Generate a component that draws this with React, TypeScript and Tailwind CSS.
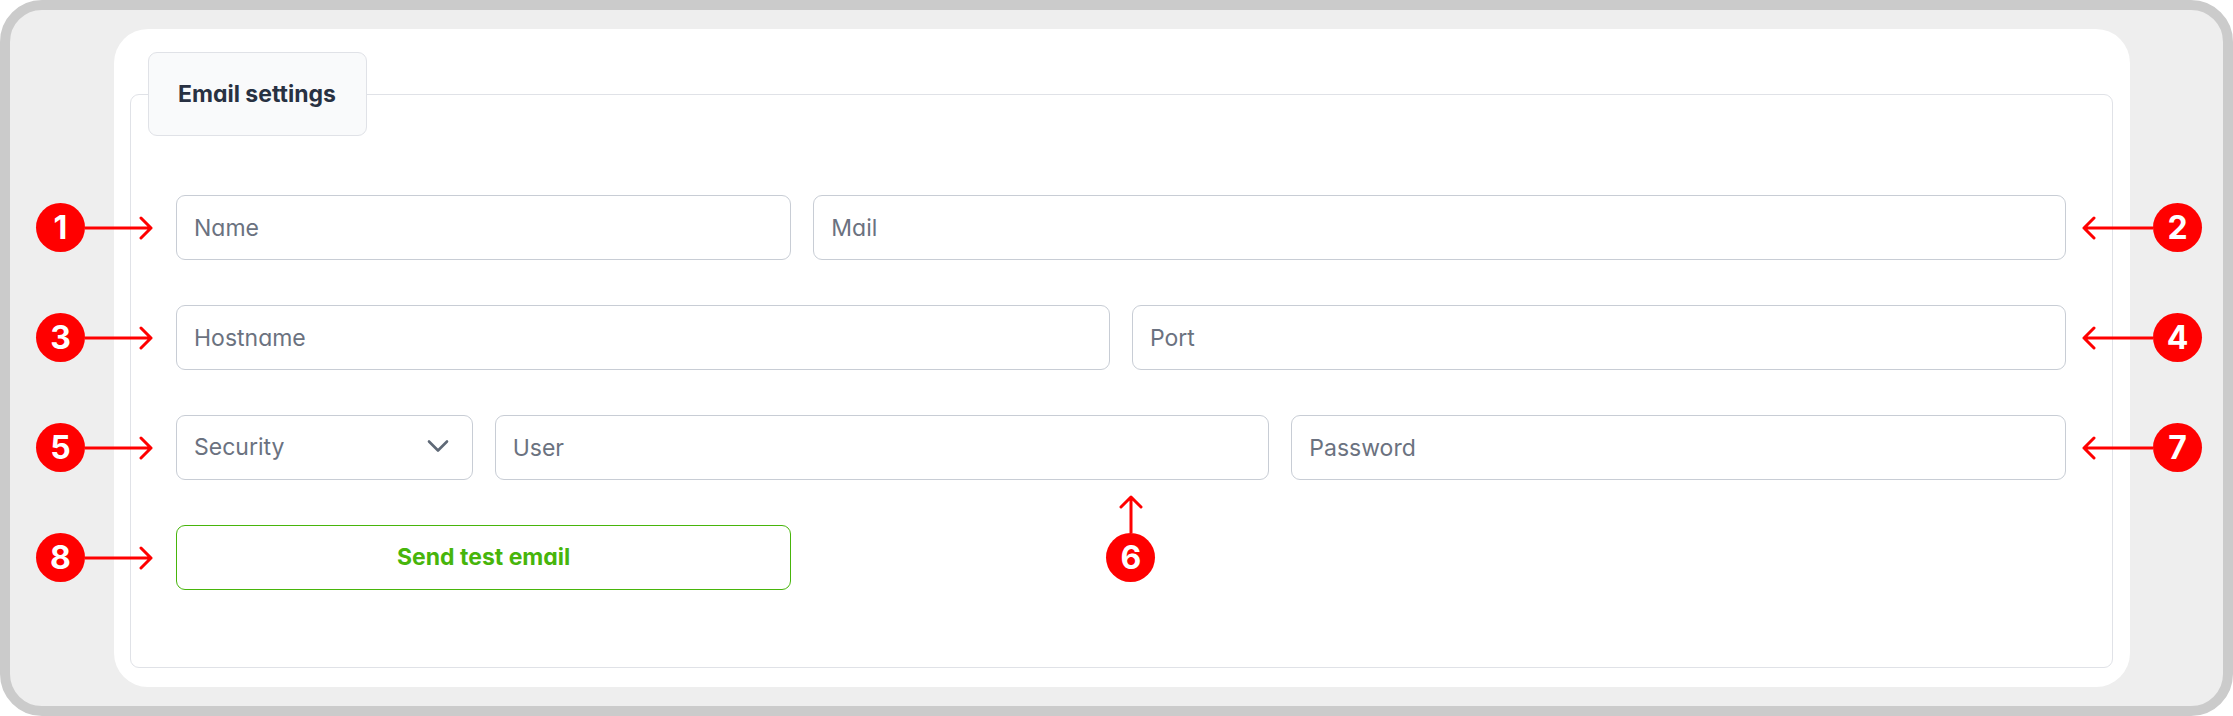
import type { ReactNode } from 'react';

type Side = 'left' | 'right' | 'bottom';

const inputClass =
  'block h-[65px] w-full rounded-[9px] border border-[#c8cdd5] bg-white px-[17px] text-[23px] text-[#6b7280] placeholder:text-[#6b7280] outline-none focus:border-[#47b50b]';

const calloutClass: Record<Side, string> = {
  left: 'right-full top-0 mr-[23px] h-full flex-row',
  right: 'left-full top-0 ml-4 h-full flex-row-reverse',
  bottom: 'top-full right-[114px] mt-[15px] flex-col-reverse',
};

const Arrow = ({ side }: { side: Side }) => {
  if (side === 'bottom') {
    return (
      <svg width="24" height="38" viewBox="0 0 24 38" fill="none" stroke="#ff0000" strokeWidth="3" strokeLinecap="round" strokeLinejoin="round">
        <path d="M12 38V2M2 12L12 2L22 12" />
      </svg>
    );
  }
  if (side === 'right') {
    return (
      <svg width="71" height="24" viewBox="0 0 71 24" fill="none" stroke="#ff0000" strokeWidth="3" strokeLinecap="round" strokeLinejoin="round">
        <path d="M71 12H2M12 2L2 12L12 22" />
      </svg>
    );
  }
  return (
    <svg width="68" height="24" viewBox="0 0 68 24" fill="none" stroke="#ff0000" strokeWidth="3" strokeLinecap="round" strokeLinejoin="round">
      <path d="M0 12H66M56 2L66 12L56 22" />
    </svg>
  );
};

const Callout = ({ number, side }: { number: number; side: Side }) => (
  <div className={`pointer-events-none absolute flex items-center ${calloutClass[side]}`}>
    <span className="flex size-[49px] shrink-0 items-center justify-center rounded-full bg-[#ff0000] text-[32px] leading-none font-bold text-white">
      {number}
    </span>
    <Arrow side={side} />
  </div>
);

const Field = ({ span, callout, side, children }: { span: string; callout: number; side: Side; children: ReactNode }) => (
  <div className={`relative ${span}`}>
    {children}
    <Callout number={callout} side={side} />
  </div>
);

const App = () => {
  return (
    <main className="rounded-[42px] border-[10px] border-[#cbcbcb] bg-[#eeeeee] py-[19px] pr-[93px] pl-[104px] font-['Inter',sans-serif]">
      <form className="rounded-[34px] bg-white pt-[23px] pr-[17px] pb-[19px] pl-4" onSubmit={(e) => e.preventDefault()}>
        <fieldset className="rounded-[9px] border border-[#e0e2e7] pr-[46px] pb-[77px] pl-[45px]">
          <legend className="-ml-7 flex h-[84px] items-center rounded-[9px] border border-[#e0e2e7] bg-[#f9fafb] pr-[30px] pl-[29px] text-[23px] font-bold text-[#283142] [font-feature-settings:'cv11']">
            Email settings
          </legend>
          <div className="grid grid-cols-12 gap-x-[22px] gap-y-[45px] pt-[59px]">
            <Field span="col-span-4" callout={1} side="left">
              <input type="text" aria-label="Name" placeholder="Name" className={`${inputClass} [font-feature-settings:'cv11']`} />
            </Field>
            <Field span="col-span-8" callout={2} side="right">
              <input type="email" aria-label="Mail" placeholder="Mail" className={`${inputClass} [font-feature-settings:'cv11']`} />
            </Field>

            <Field span="col-span-6" callout={3} side="left">
              <input type="text" aria-label="Hostname" placeholder="Hostname" className={`${inputClass} [font-feature-settings:'cv11']`} />
            </Field>
            <Field span="col-span-6" callout={4} side="right">
              <input type="text" aria-label="Port" placeholder="Port" className={inputClass} />
            </Field>

            <Field span="col-span-2" callout={5} side="left">
              <select aria-label="Security" defaultValue="" className={`${inputClass} appearance-none`}>
                <option value="">Security</option>
              </select>
              <svg className="pointer-events-none absolute top-[24px] right-[24px]" width="22" height="16" viewBox="0 0 22 16" fill="none" stroke="#5f6977" strokeWidth="2.6" strokeLinecap="round" strokeLinejoin="round">
                <path d="M2 2.5L11 11.5L20 2.5" />
              </svg>
            </Field>
            <Field span="col-span-5" callout={6} side="bottom">
              <input type="text" aria-label="User" placeholder="User" className={inputClass} />
            </Field>
            <Field span="col-span-5" callout={7} side="right">
              <input type="password" aria-label="Password" placeholder="Password" className={inputClass} />
            </Field>

            <Field span="col-span-4" callout={8} side="left">
              <button
                type="button"
                className="block h-[65px] w-full cursor-pointer rounded-[9px] border border-[#47b50b] text-[23px] font-bold text-[#47b50b] [font-feature-settings:'cv11']"
              >
                Send test email
              </button>
            </Field>
          </div>
        </fieldset>
      </form>
    </main>
  );
};

export default App;
